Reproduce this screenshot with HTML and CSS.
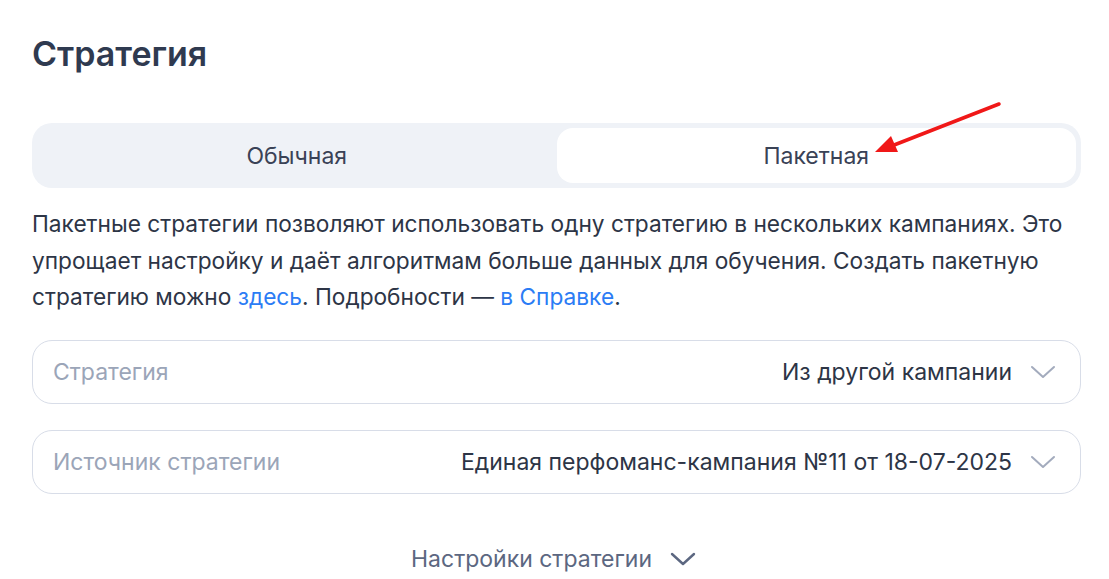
FILE: index.html
```html
<!DOCTYPE html>
<html>

<head>
    <meta charset="utf-8">
    <link rel="stylesheet" href="styles.css">
</head>

<body>
    <div class="page">
        <h1 class="title">Стратегия</h1>

        <div class="tabs">
            <div class="tab">Обычная</div>
            <div class="tab active">Пакетная</div>
            <svg class="pointer" width="140" height="60" viewBox="0 0 140 60">
                <line x1="132" y1="5" x2="22" y2="48" stroke="#f01818" stroke-width="3.5" stroke-linecap="round" />
                <polygon points="8,53 24,37 31,53" fill="#f01818" />
            </svg>
        </div>

        <p class="about">
            Пакетные стратегии позволяют использовать одну стратегию в нескольких кампаниях. Это
            упрощает настройку и даёт алгоритмам больше данных для обучения. Создать пакетную
            стратегию можно <a href="#">здесь</a>. Подробности — <a href="#">в Справке</a>.
        </p>

        <div class="field">
            <span class="label">Стратегия</span>
            <span class="value">Из другой кампании</span>
            <svg class="chevron" width="26" height="14" viewBox="0 0 26 14">
                <path d="M2 2 L13 12 L24 2" fill="none" stroke="#a3abbd" stroke-width="2" stroke-linecap="round" stroke-linejoin="round" />
            </svg>
        </div>

        <div class="field">
            <span class="label">Источник стратегии</span>
            <span class="value">Единая перфоманс-кампания №11 от 18-07-2025</span>
            <svg class="chevron" width="26" height="14" viewBox="0 0 26 14">
                <path d="M2 2 L13 12 L24 2" fill="none" stroke="#a3abbd" stroke-width="2" stroke-linecap="round" stroke-linejoin="round" />
            </svg>
        </div>

        <div class="more">
            <span>Настройки стратегии</span>
            <svg class="chevron" width="26" height="14" viewBox="0 0 26 14">
                <path d="M2 2 L13 12 L24 2" fill="none" stroke="#5c6781" stroke-width="2.4" stroke-linecap="round" stroke-linejoin="round" />
            </svg>
        </div>
    </div>
</body>

</html>
```

FILE: styles.css
```css
body {
    margin: 0;
    background-color: #ffffff;
    font-family: Inter, "Noto Sans", sans-serif;
    color: #2d3546;
}

.page {
    width: 1049px;
    padding: 32px 0 0 32px;
}

.title {
    margin: 0;
    font-size: 34px;
    font-weight: 600;
    line-height: 44px;
    color: #2f3a50;
}

.tabs {
    position: relative;
    margin-top: 47px;
    height: 65px;
    padding: 5px;
    box-sizing: border-box;
    border-radius: 20px;
    background-color: #eff2f7;
    display: flex;
}

.tab {
    flex: 1;
    display: flex;
    justify-content: center;
    align-items: center;
    font-size: 23px;
    color: #3a4256;
    border-radius: 16px;
}

.tab.active {
    background-color: #ffffff;
}

.pointer {
    position: absolute;
    left: 835px;
    top: -24px;
}

.about {
    margin: 18px 0 0 0;
    font-size: 22.7px;
    line-height: 36.5px;
    color: #2d3546;
}

.about a {
    color: #2b7cf5;
    text-decoration: none;
}

.field {
    margin-top: 24px;
    height: 64px;
    box-sizing: border-box;
    border: 1px solid #d8dde8;
    border-radius: 20px;
    padding: 0 24px 0 20px;
    display: flex;
    align-items: center;
    font-size: 23px;
}

.field + .field {
    margin-top: 26px;
}

.label {
    flex: 1;
    color: #9ba5b8;
}

.value {
    color: #2d3546;
}

.field .chevron {
    margin-left: 18px;
}

.more {
    margin-top: 51px;
    padding-right: 6px;
    display: flex;
    justify-content: center;
    align-items: center;
    font-size: 23px;
    color: #5c6781;
}

.more .chevron {
    margin-left: 18px;
}
```
